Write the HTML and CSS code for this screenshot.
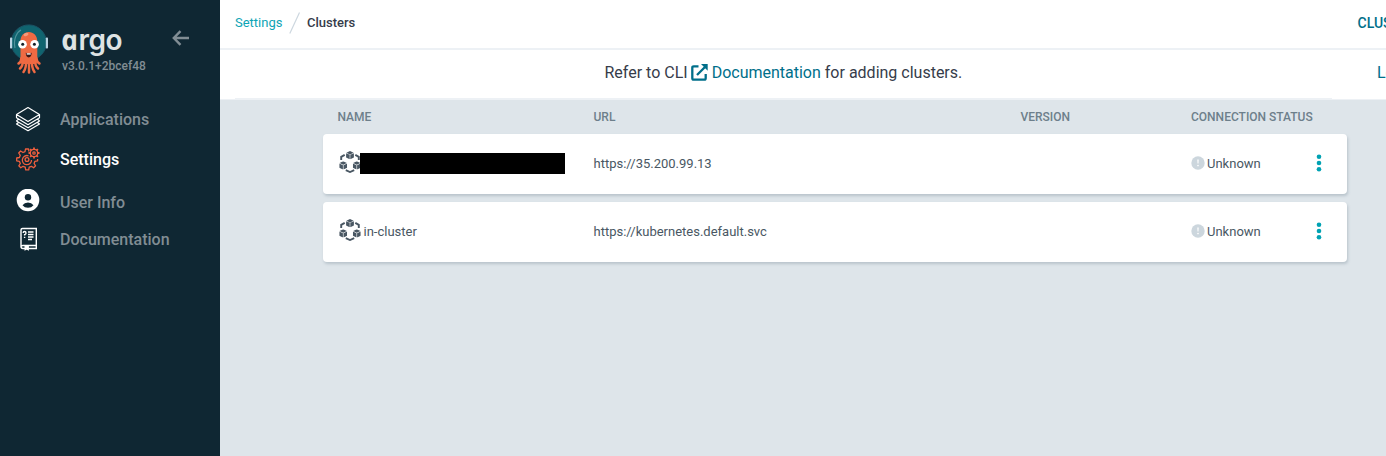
FILE: index.html
```
<!DOCTYPE html>
<html lang="en">
<head>
<meta charset="utf-8">
<title>Clusters - Argo</title>
<link rel="stylesheet" href="styles.css">
</head>
<body>
<svg class="defs" aria-hidden="true">
  <symbol id="cube" viewBox="0 0 8 9" preserveAspectRatio="none">
    <path d="M4 0 7.6 1.800 4 3.600.4 1.800Z"/><path d="M.1 2.300 3.700 4.100v4.600L.1 6.900ZM7.900 2.300 4.300 4.100v4.600l3.600-1.800Z"/>
  </symbol>
  <symbol id="cluster" viewBox="0 0 22 22">
    <use href="#cube" x="7" y="0" width="8" height="8.500"/>
    <use href="#cube" x=".2" y="10.300" width="8" height="8.500"/>
    <use href="#cube" x="13.800" y="10.300" width="8" height="8.500"/>
    <path d="M5.700 3.900 2.200 5.900v3.200M16.300 3.900 19.800 5.900v3.200M6.800 19.200 11 21l4.200-1.800" fill="none" stroke="currentColor" stroke-width="1.900"/>
  </symbol>
  <symbol id="unknown" viewBox="0 0 14 14">
    <circle cx="7" cy="7" r="6.700"/><path d="M6.300 3.600h1.400l-.2 4H6.500Z" fill="#fff"/><circle cx="7" cy="9.600" r=".8" fill="#fff"/>
  </symbol>
  <symbol id="dots" viewBox="0 0 6 18">
    <circle cx="3" cy="2.700" r="2.300"/><circle cx="3" cy="9" r="2.300"/><circle cx="3" cy="15.300" r="2.300"/>
  </symbol>
</svg>
<div class="layout">
  <aside class="sidebar">
    <div class="brand">
      <svg class="mascot" viewBox="0 0 40 52">
        <circle cx="18.800" cy="18.500" r="17.600" fill="#10646f" stroke="#1c5264"/>
        <rect x="0" y="13.500" width="2.200" height="11" rx=".8" fill="#bad4e3"/><rect x="35.800" y="13.500" width="2.200" height="11" rx=".8" fill="#bad4e3"/>
        <path d="M5 24C3 15 7 8 11 6" fill="none" stroke="#50929b" stroke-width="1.200"/>
        <path d="M10.500 18C9.500 4.500 28 4.500 27.300 18v18l-1 4H11.500l-1-4Z" fill="#ef6a43"/>
        <path d="M11.500 34Q11 38.500 8.500 39.500M13 36q0 6-3 8.500M16 36q.5 8-2.500 12M19 36v12.500M22 36q-.5 8 2.500 12M25 36q0 6 3 8.500M26.300 34Q27 38.500 29.500 39.500" fill="none" stroke="#ef6a43" stroke-width="2.500" stroke-linecap="round"/>
        <ellipse cx="16" cy="10.500" rx="2.500" ry="1.500" fill="#f59b7b" transform="rotate(-20 16 10.500)"/>
        <circle cx="12.500" cy="20.300" r="4.300" fill="#fff"/><circle cx="24.600" cy="20.300" r="4.300" fill="#fff"/>
        <circle cx="12.700" cy="20.300" r="1.500" fill="#152027"/><circle cx="24.400" cy="20.300" r="1.500" fill="#152027"/>
        <path d="M15.700 28.800q3 1.300 6 0-.3 4.600-3 4.600t-3-4.600Z" fill="#3d1716"/><path d="M16.700 29.300h4v1.300h-4Z" fill="#fff"/>
      </svg>
      <div class="brand-text">
        <div class="wordmark"><span class="slant">a</span>rgo</div>
        <div class="version">v3.0.1+2bcef48</div>
      </div>
      <svg class="collapse" viewBox="0 0 18 16"><path d="M17 8H2M8.500 1.200 1.800 8l6.700 6.800" fill="none" stroke="currentColor" stroke-width="2.400"/></svg>
    </div>
    <nav class="nav">
      <a class="nav-item">
        <svg viewBox="0 0 26 26" fill="none" stroke="#fff" stroke-width="1.200" stroke-linejoin="round"><path d="M13 1.500 24.500 8.500 13 15.500 1.500 8.500ZM1.500 8.500v3.200L13 18.700l11.500-7V8.500M3.500 13.300l-2 1.600L13 21.700l11.500-6.800-2-1.600M3.500 16.500l-2 1.400L13 24.700l11.500-6.800-2-1.400"/></svg>
        <span>Applications</span>
      </a>
      <a class="nav-item active">
        <svg viewBox="0 0 26 26" fill="none" stroke="#ee5f3e" stroke-width="1.300" stroke-linejoin="round">
          <path d="M14 5.500 13.500 3h-3L10 5.600 8 6.500 5.600 5 3.700 7l1.600 2.300-.9 2.200-2.700.5v2.800l2.700.5.9 2.200-1.500 2.300 2 2 2.200-1.500 2.200.9.500 2.600h3l.5-2.600 2.200-.9 2.200 1.500 2-2-1.500-2.300.8-2.200 2.700-.5V13"/>
          <path d="M13.500 9.800A4.600 4.600 0 1 0 16.500 14"/><circle cx="12" cy="13.500" r="1.900"/>
          <circle cx="19" cy="7" r="3.700"/><circle cx="19" cy="7" r="1.200"/><path d="M19 1.500v2M19 10.500v2M13.500 7h2M22.500 7h2M15.100 3.100l1.400 1.400M21.500 9.500l1.400 1.400M15.100 10.900l1.400-1.400M21.500 4.500l1.400-1.400" stroke-width="1.800"/>
        </svg>
        <span>Settings</span>
      </a>
      <a class="nav-item user">
        <svg viewBox="0 0 26 26"><circle cx="13" cy="11" r="11.300" fill="#fff"/><circle cx="13" cy="8.200" r="3.200" fill="#0f2733"/><path d="M7.500 16.200Q9.500 13.600 13 13.600t5.500 2.600Q16.500 18.800 13 18.800t-5.500-2.600Z" fill="#0f2733"/></svg>
        <span>User Info</span>
      </a>
      <a class="nav-item docs">
        <svg viewBox="0 0 26 26" fill="none" stroke="#fff" stroke-width="1.400"><path d="M7.500 2.500h13.800v17H8q-2 0-2 1.500V4q0-1.500 1.500-1.500ZM6 20.500Q6 22.500 8 22.500h2M13.500 22.500h7.800V19"/><path d="M10.200 20v3.600l1.500-.8 1.500.8V20Z" fill="#fff"/><path d="M8.200 7q0-1.500 1.400-1.500T11 6.900 9.600 8.600v1M9.600 10.800v1.200M13 6h5.500M13 8.500h5.500M13 11h5.500M13 13.500h4"/></svg>
        <span>Documentation</span>
      </a>
    </nav>
  </aside>
  <main class="main">
    <header class="topbar">
      <div class="crumbs"><a>Settings</a><svg viewBox="0 0 12 22"><path d="M.8 21.500 10.500.5" stroke="#cdd7df" stroke-width="1.200"/></svg><b>Clusters</b></div>
      <div class="page-title">CLUSTERS</div>
    </header>
    <div class="help">
      <div class="help-inner">Refer to CLI <svg viewBox="0 0 17 17"><path d="M7.500 2.300H2.700Q1.300 2.300 1.300 3.700v10.600q0 1.400 1.400 1.400h10.600q1.400 0 1.400-1.400V10M6 11l8-8" fill="none" stroke="currentColor" stroke-width="2.300"/><path d="M10 0h6.700v6.700Z" fill="currentColor"/></svg><a>Documentation</a>&nbsp;for adding clusters.</div>
      <a class="logout">Log out</a>
    </div>
    <section class="clusters">
      <div class="grid head"><span>NAME</span><span>URL</span><span>VERSION</span><span>CONNECTION STATUS</span></div>
      <div class="grid row">
        <div class="name"><svg><use href="#cluster"/></svg><span class="redacted"></span></div>
        <span>https://35.200.99.13</span><span></span>
        <div class="status"><svg><use href="#unknown"/></svg>Unknown</div>
        <svg class="menu"><use href="#dots"/></svg>
      </div>
      <div class="grid row">
        <div class="name"><svg><use href="#cluster"/></svg><span class="label">in-cluster</span></div>
        <span>https://kubernetes.default.svc</span><span></span>
        <div class="status"><svg><use href="#unknown"/></svg>Unknown</div>
        <svg class="menu"><use href="#dots"/></svg>
      </div>
    </section>
  </main>
</div>
</body>
</html>
```
FILE: styles.css
```
* { box-sizing: border-box; }
body { margin: 0; font-family: Roboto, sans-serif; color: #363c4a; overflow: hidden; }
svg { flex: none; display: block; }
.defs { display: none; }
.layout { display: flex; height: 456px; }

.sidebar { width: 220px; flex: none; background: #0f2733; color: #818d94; }
.brand { display: flex; align-items: flex-start; height: 99px; padding: 24px 0 0 10px; }
.mascot { width: 40px; height: 52px; }
.brand-text { width: 122px; padding-left: 12px; }
.wordmark { width: max-content; height: 34px; font: 600 28px/30px Inter, sans-serif; letter-spacing: -0.5px; color: #dee3e4; }
.slant { display: inline-block; font: italic 700 28.500px/30px "Open Sans", sans-serif; transform: skewX(12deg); transform-origin: 0 75%; }
.version { font-size: 12px; line-height: 16px; font-weight: 500; white-space: nowrap; }
.collapse { width: 18px; height: 16px; margin-top: 5.5px; }

.nav-item { display: flex; align-items: center; gap: 19px; height: 40px; padding-left: 15px; font-size: 16px; font-weight: 500; }
.nav-item svg { width: 26px; height: 26px; }
.nav-item.active { color: #fff; }
.nav-item.user { height: 44px; }
.nav-item.user svg { margin-top: 2px; }
.nav-item.user span { margin-top: 2px; }
.nav-item.docs { height: 32px; }

.main { flex: 1; min-width: 0; overflow: hidden; background: #dee5ea; }
.topbar { display: flex; justify-content: space-between; height: 50px; background: #fff; border-bottom: 2px solid #edf1f5; padding: 12px 0 0 15px; }
.crumbs { display: flex; font-size: 13px; line-height: 22px; }
.crumbs a { color: #0da4b5; }
.crumbs svg { width: 12px; height: 22px; margin: 0 5.5px 0 7px; }
.crumbs b { font-weight: 500; }
.page-title { width: 28.5px; font-size: 14px; line-height: 22px; font-weight: 500; color: #006f8a; white-space: nowrap; }
.help { display: flex; justify-content: space-between; height: 50px; background: linear-gradient(#fff 49px, #edf1f5 49px); }
.help-inner { display: flex; width: 1097px; margin-left: 15px; border-bottom: 2px solid #edf1f5; padding-left: 369.5px; font-size: 16px; line-height: 45px; white-space: pre; }
.help-inner svg { width: 17px; height: 17px; margin: 14px 3.5px 0 -0.5px; color: #006f8a; }
.help a { color: #006f8a; }
.logout { width: 9px; font-size: 16px; line-height: 45px; white-space: nowrap; }

.clusters { width: 1024px; margin-left: 103px; }
.grid { display: grid; grid-template-columns: 256px 427px 170.5px 125px 1fr; align-items: center; padding-left: 14.5px; }
.head { height: 34px; font-size: 12px; font-weight: 500; color: #6d7f8b; }
.row { height: 60px; padding-bottom: 2px; margin-bottom: 8px; border-radius: 4px; background: #fff; box-shadow: 1px 2px 3px rgba(90, 110, 125, .28); font-size: 13px; color: #495763; }
.name, .status { display: flex; align-items: center; }
.name svg { width: 22px; height: 22px; margin: -2px 0 0 1.5px; fill: currentColor; color: #495763; }
.label { margin-left: 2.5px; }
.redacted { width: 205px; height: 21px; margin-left: -1px; background: #000; }
.status svg { width: 14px; height: 14px; margin-right: 2px; fill: #ccd6dd; }
.menu { width: 6px; height: 18px; margin-top: -1px; fill: #00a2b3; }
```
